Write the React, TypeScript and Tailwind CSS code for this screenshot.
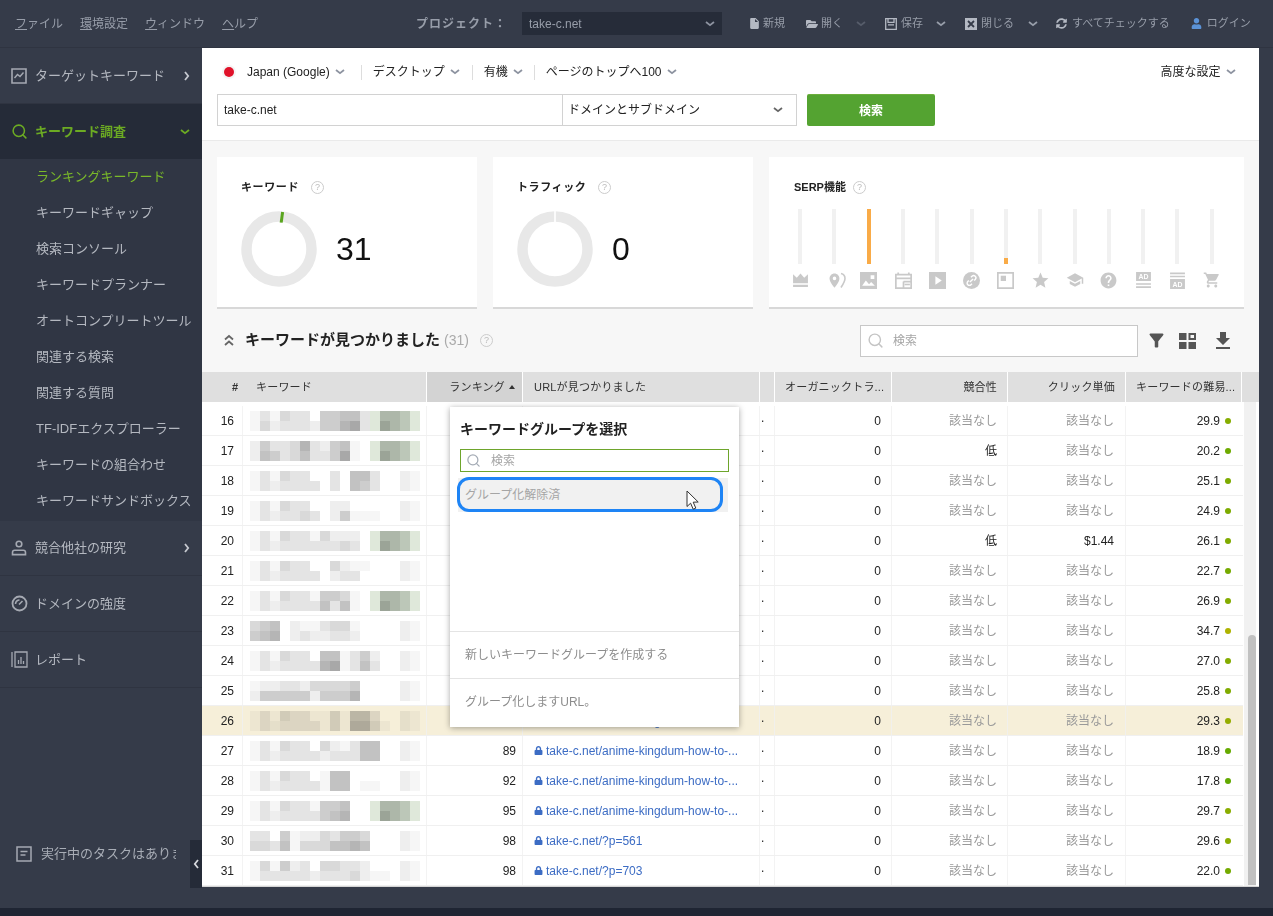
import type { ReactNode } from 'react'
import { MdPlace, MdStar, MdSchool, MdHelp, MdShoppingCart, MdFileDownload, MdInsertDriveFile, MdFilterAlt } from 'react-icons/md'
import { FaFolderOpen, FaUser, FaSyncAlt, FaLock } from 'react-icons/fa'
import { Search } from 'lucide-react'

const FONT = "font-['Liberation_Sans','Noto_Sans_CJK_JP',sans-serif]"

function Chev({ className = 'text-[#8d93a0]' }: { className?: string }) {
  return (
    <svg width="10" height="6" viewBox="0 0 10 6" className={`shrink-0 ${className}`}>
      <path d="M1 1l4 3.2L9 1" fill="none" stroke="currentColor" strokeWidth="1.8" />
    </svg>
  )
}

function ChevRight({ className = 'text-[#c5c8cf]' }: { className?: string }) {
  return (
    <svg width="6" height="10" viewBox="0 0 6 10" className={`shrink-0 ${className}`}>
      <path d="M1 1l3.2 4L1 9" fill="none" stroke="currentColor" strokeWidth="1.8" />
    </svg>
  )
}

function Help() {
  return (
    <span className="flex h-[13px] w-[13px] items-center justify-center rounded-full border border-[#ccc] text-[9px] leading-none text-[#bbb]">
      ?
    </span>
  )
}

// top bar

function TopBar() {
  return (
    <div className={`flex h-12 shrink-0 items-center border-b border-[#2f3441] bg-[#353b49] pl-[15px] text-[#979da9]`}>
      <div className="flex w-[401px] shrink-0 gap-[17px] text-[12px]">
        <span><span className="underline">フ</span>ァイル</span>
        <span><span className="underline">環</span>境設定</span>
        <span><span className="underline">ウ</span>ィンドウ</span>
        <span><span className="underline">ヘ</span>ルプ</span>
      </div>
      <span className="w-[106px] shrink-0 text-[12px] font-bold tracking-[1px]">プロジェクト：</span>
      <div className="flex h-[23px] w-[200px] shrink-0 items-center justify-between bg-[#262c39] pl-[7px] pr-[7px] text-[12px]">
        take-c.net
        <Chev />
      </div>
      <div className="flex items-center text-[11px]">
        <MdInsertDriveFile size={13} className="ml-[26px] text-[#b4b9c3]" />
        <span className="ml-[2px] tracking-[0px]">新規</span>
        <FaFolderOpen size={12} className="ml-[21px] text-[#b4b9c3]" />
        <span className="ml-[3px]">開く</span>
        <Chev className="ml-[13px] text-[#565c6a]" />
        <svg width="12" height="12" viewBox="0 0 12 12" className="ml-[19px] text-[#b4b9c3]">
          <path d="M.7.7h10.6v10.6H.7zM3 .7v3.6h6V.7M3 6.8h6" fill="none" stroke="currentColor" strokeWidth="1.3" />
        </svg>
        <span className="ml-[4px]">保存</span>
        <Chev className="ml-[13px]" />
        <svg width="12" height="12" viewBox="0 0 12 12" className="ml-[19px] text-[#b4b9c3]">
          <path d="M0 0h12v12H0z" fill="currentColor" />
          <path d="M3 3l6 6M9 3l-6 6" stroke="#353b49" strokeWidth="1.8" />
        </svg>
        <span className="ml-[4px]">閉じる</span>
        <Chev className="ml-[14px]" />
        <FaSyncAlt size={11} className="ml-[18px] text-[#b4b9c3]" />
        <span className="ml-[5px]">すべてチェックする</span>
        <FaUser size={11} className="ml-[21px] text-[#5b93d8]" />
        <span className="ml-[5px]">ログイン</span>
      </div>
    </div>
  )
}

// sidebar

const SUB_ITEMS = [
  'ランキングキーワード',
  'キーワードギャップ',
  '検索コンソール',
  'キーワードプランナー',
  'オートコンプリートツール',
  '関連する検索',
  '関連する質問',
  'TF-IDFエクスプローラー',
  'キーワードの組合わせ',
  'キーワードサンドボックス',
]

function NavRow({ icon, label, chevron, height = 'h-[56px]' }: { icon: ReactNode; label: string; chevron?: boolean; height?: string }) {
  return (
    <div className={`flex ${height} items-center border-b border-[#2f3441] pl-[11px] pr-[12px] text-[13px] text-[#b4b8c0]`}>
      <span className="flex w-[24px] shrink-0 items-center">{icon}</span>
      <span className="flex-1">{label}</span>
      {chevron && <ChevRight />}
    </div>
  )
}

function Sidebar() {
  return (
    <div className="relative flex h-full w-[202px] shrink-0 flex-col">
      <NavRow
        label="ターゲットキーワード"
        chevron
        icon={
          <svg width="16" height="16" viewBox="0 0 16 16" className="text-[#a5a9b2]">
            <path d="M1 1h14v14H1z" fill="none" stroke="currentColor" strokeWidth="1.6" />
            <path d="M3.5 10l3-3.5 2.5 2 3.5-4" fill="none" stroke="currentColor" strokeWidth="1.4" />
          </svg>
        }
      />
      <div className="flex h-[55px] items-center bg-[#252b38] pl-[11px] pr-[12px] text-[13px] font-bold text-[#6cab23]">
        <Search size={17} strokeWidth={2.2} className="mr-[7px] shrink-0" />
        <span className="flex-1">キーワード調査</span>
        <Chev className="text-[#6cab23]" />
      </div>
      <div className="flex flex-col bg-[#303644] pb-[2px]">
        {SUB_ITEMS.map((s, i) => (
          <div key={s} className={`flex h-[36px] items-center whitespace-nowrap pl-[36px] text-[13px] ${i === 0 ? 'text-[#7ab929]' : 'text-[#b4b8c0]'}`}>
            {s}
          </div>
        ))}
      </div>
      <NavRow
        label="競合他社の研究"
        chevron
        height="h-[55px]"
        icon={
          <svg width="16" height="16" viewBox="0 0 16 16" className="text-[#a5a9b2]">
            <circle cx="8" cy="4" r="2.8" fill="none" stroke="currentColor" strokeWidth="1.6" />
            <path d="M1.5 14.6v-2.2c0-1.4 1-2.2 2.2-2.2h8.6c1.2 0 2.2.8 2.2 2.2v2.2z" fill="none" stroke="currentColor" strokeWidth="1.6" />
          </svg>
        }
      />
      <NavRow
        label="ドメインの強度"
        icon={
          <svg width="17" height="17" viewBox="0 0 17 17" className="text-[#a5a9b2]">
            <circle cx="8.5" cy="8.5" r="7" fill="none" stroke="currentColor" strokeWidth="1.8" />
            <path d="M8 9.5l3.5-3.5M4.5 9a4 4 0 0 1 4-4" fill="none" stroke="currentColor" strokeWidth="1.6" />
          </svg>
        }
      />
      <NavRow
        label="レポート"
        icon={
          <svg width="17" height="17" viewBox="0 0 17 17" className="text-[#a5a9b2]">
            <path d="M1 1v15M4 1h12v15H4zM7.5 13V9M10 13V6M12.5 13v-3" fill="none" stroke="currentColor" strokeWidth="1.3" />
          </svg>
        }
      />
      <div className="mt-auto flex h-[96px] items-center pb-[12px]">
        <svg width="16" height="16" viewBox="0 0 16 16" className="ml-[16px] shrink-0 text-[#a5a9b2]">
          <path d="M1 1h14v14H1zM4.5 5.5h7M4.5 9h5" fill="none" stroke="currentColor" strokeWidth="1.5" />
        </svg>
        <span className="ml-[9px] w-[135px] overflow-hidden whitespace-nowrap text-[13px] text-[#a8adb6]">実行中のタスクはありません</span>
      </div>
      <div className="absolute bottom-[20px] right-0 flex h-[48px] w-[12px] items-center justify-center bg-[#252b38]">
        <svg width="6" height="10" viewBox="0 0 6 10" className="text-[#d5d7dc]">
          <path d="M5 1L1.8 5 5 9" fill="none" stroke="currentColor" strokeWidth="1.8" />
        </svg>
      </div>
    </div>
  )
}

// summary cards

function Donut({ kind }: { kind: 'tick' | 'empty' }) {
  return (
    <svg width="76" height="76" viewBox="0 0 76 76" className="shrink-0">
      <circle cx="38" cy="38" r="32.5" fill="none" stroke="#e8e8e8" strokeWidth="10.5" />
      {kind === 'tick' ? (
        <path d="M41.6 1l-1.4 10.6" stroke="#5aa51f" strokeWidth="3" />
      ) : (
        <path d="M38 0v11" stroke="#fff" strokeWidth="1.6" />
      )}
    </svg>
  )
}

function StatCard({ title, value, kind, titleWidth }: { title: string; value: string; kind: 'tick' | 'empty'; titleWidth: string }) {
  return (
    <div className="h-[152px] w-[260px] shrink-0 border-b-2 border-[#d8d8d8] bg-white pl-[24px] pt-[23px]">
      <div className="flex h-[14px] items-center">
        <span className={`${titleWidth} text-[11px] font-bold tracking-[0.6px] text-[#222]`}>{title}</span>
        <Help />
      </div>
      <div className="mt-[17px] flex items-center">
        <Donut kind={kind} />
        <span className="ml-[19px] text-[32px] leading-none text-[#111]">{value}</span>
      </div>
    </div>
  )
}

const ICO = 'h-[17px] w-[17px] text-[#c9c9c9]'

const SERP_ICONS: ReactNode[] = [
  <svg key="crown" viewBox="0 0 16 16" className={ICO}><path d="M1 2l3.5 3.5L8 1.5l3.5 4L15 2v8.5H1zM1 12h14v2H1z" fill="currentColor" /></svg>,
  <span key="pin" className="relative flex"><MdPlace className={ICO} /><svg viewBox="0 0 6 16" className="absolute -right-[3px] top-0 h-[17px] w-[6px] text-[#c9c9c9]"><path d="M1 15c2-3 4-6 4-9S3.5 1.500 1 1" fill="none" stroke="currentColor" strokeWidth="1.6" /></svg></span>,
  <svg key="image" viewBox="0 0 16 16" className={ICO}><path d="M0 0h16v16H0z" fill="currentColor" /><path d="M2 13l3.500-5 3 3.500 2-2 3.500 3.500zM10 3h3.500v3.500H10z" fill="#fff" /></svg>,
  <svg key="layout" viewBox="0 0 16 16" className={ICO}><path d="M.8 2.500h14.400v12.700H.800zM.8 6h14.400M8 9v6M8 9h7M3 .5v2M13 .5v2" fill="none" stroke="currentColor" strokeWidth="1.600" /><path d="M9 11h5v1.500H9z" fill="currentColor" /></svg>,
  <svg key="play" viewBox="0 0 16 16" className={ICO}><path d="M0 0h16v16H0z" fill="currentColor" /><path d="M6 4l6 4-6 4z" fill="#fff" /></svg>,
  <svg key="link" viewBox="0 0 16 16" className={ICO}><circle cx="8" cy="8" r="8" fill="currentColor" /><path d="M6.500 9.500l3-3M7.500 5l1-1a2.100 2.100 0 0 1 3 3l-1 1M8.500 11l-1 1a2.100 2.100 0 0 1-3-3l1-1" fill="none" stroke="#fff" strokeWidth="1.300" /></svg>,
  <svg key="snippet" viewBox="0 0 16 16" className={ICO}><path d="M.8.800h14.400v14.400H.800z" fill="none" stroke="currentColor" strokeWidth="1.600" /><path d="M3.500 3.500h5v5h-5z" fill="currentColor" /></svg>,
  <MdStar key="star" className="h-[19px] w-[19px] text-[#c9c9c9]" />,
  <MdSchool key="school" className="h-[18px] w-[18px] text-[#c9c9c9]" />,
  <MdHelp key="help" className="h-[19px] w-[19px] text-[#c9c9c9]" />,
  <svg key="ad1" viewBox="0 0 16 16" className={ICO}><path d="M1 0h14v8.500H1zM1 10.500h14V12H1zM1 13.500h14V15H1z" fill="currentColor" /><text x="8" y="7" textAnchor="middle" fontSize="6.500" fontWeight="700" fill="#fff">AD</text></svg>,
  <svg key="ad2" viewBox="0 0 16 16" className={ICO}><path d="M1 .5h14V2H1zM1 3.500h14V5H1zM1 6.500h14V16H1z" fill="currentColor" /><text x="8" y="14" textAnchor="middle" fontSize="6.500" fontWeight="700" fill="#fff">AD</text></svg>,
  <MdShoppingCart key="cart" className="h-[18px] w-[18px] text-[#c9c9c9]" />,
]

const SERP_FILL: Record<number, number> = { 2: 55, 6: 6 }

function SerpCard() {
  return (
    <div className="h-[152px] w-[475px] shrink-0 border-b-2 border-[#d8d8d8] bg-white pl-[14px] pt-[23px]">
      <div className="ml-[11px] flex h-[14px] items-center">
        <span className="w-[60px] text-[11px] font-bold text-[#222]">SERP機能</span>
        <span className="-ml-[1px]"><Help /></span>
      </div>
      <div className="mt-[15px] flex">
        {SERP_ICONS.map((icon, i) => (
          <div key={i} className="flex w-[34.3px] shrink-0 flex-col items-center">
            <div className="relative h-[55px] w-[4px] bg-[#f1f1f1]">
              {SERP_FILL[i] && (
                <div className="absolute bottom-0 left-0 w-full bg-[#f9ab47]" style={{ height: SERP_FILL[i] }} />
              )}
            </div>
            <div className="mt-[7px] flex h-[18px] items-center justify-center">{icon}</div>
          </div>
        ))}
      </div>
    </div>
  )
}

// table

const GRAYS: Record<string, string> = {
  '1': '#f6f6f6', '2': '#eeeeee', '3': '#e4e4e4', '4': '#d9d9d9', '5': '#cdcdcd', '6': '#c2c2c2', '7': '#b5b5b5', '8': '#a8a8a8',
  a: '#dfe8da', b: '#bcc7b8', c: '#adb7a9', d: '#9ba497',
}

interface Row {
  n: number
  mosaic: [string, string]
  rank: string
  url: string
  comp: string
  cpc: string
  diff: string
  dot: string
}

const ANIME = 'take-c.net/anime-kingdum-how-to-...'
const NA = '該当なし'

const ROWS: Row[] = [
  { n: 16, mosaic: ['131433055663accba', '142333255783adcba'], rank: '', url: ANIME, comp: NA, cpc: NA, diff: '29.9', dot: '#86ad00' },
  { n: 17, mosaic: ['253347325610accba', '265346335810adcba'], rank: '', url: ANIME, comp: '低', cpc: NA, diff: '20.2', dot: '#6eaa00' },
  { n: 18, mosaic: ['13143300306630021', '13233330306530021'], rank: '', url: ANIME, comp: NA, cpc: NA, diff: '25.1', dot: '#7dab00' },
  { n: 19, mosaic: ['13143300220000021', '13233430251110021'], rank: '', url: ANIME, comp: NA, cpc: NA, diff: '24.9', dot: '#7dab00' },
  { n: 20, mosaic: ['131433142220accba', '132333333430adcba'], rank: '', url: ANIME, comp: '低', cpc: '$1.44', diff: '26.1', dot: '#80ab00' },
  { n: 21, mosaic: ['13143300421100021', '13233330233000021'], rank: '', url: ANIME, comp: NA, cpc: NA, diff: '22.7', dot: '#76aa00' },
  { n: 22, mosaic: ['131433155410accba', '132333363610adcba'], rank: '', url: ANIME, comp: NA, cpc: NA, diff: '26.9', dot: '#84ac00' },
  { n: 23, mosaic: ['45602113441000021', '56702322332000021'], rank: '', url: ANIME, comp: NA, cpc: NA, diff: '34.7', dot: '#aeb300' },
  { n: 24, mosaic: ['13143306613520021', '13233337813630021'], rank: '', url: ANIME, comp: NA, cpc: NA, diff: '27.0', dot: '#84ac00' },
  { n: 25, mosaic: ['12233244445000021', '25555525557000021'], rank: '', url: ANIME, comp: NA, cpc: NA, diff: '25.8', dot: '#80ab00' },
  { n: 26, mosaic: ['13143311416630021', '13233331417741021'], rank: '', url: ANIME, comp: NA, cpc: NA, diff: '29.3', dot: '#95ad00' },
  { n: 27, mosaic: ['13143304213660021', '13233332333660021'], rank: '89', url: ANIME, comp: NA, cpc: NA, diff: '18.9', dot: '#66aa00' },
  { n: 28, mosaic: ['13143301660000021', '13233331660110021'], rank: '92', url: ANIME, comp: NA, cpc: NA, diff: '17.8', dot: '#62a900' },
  { n: 29, mosaic: ['131433155600accba', '132333356700adcba'], rank: '95', url: ANIME, comp: NA, cpc: NA, diff: '29.7', dot: '#8aad00' },
  { n: 30, mosaic: ['33051224355400021', '44361444667600021'], rank: '98', url: 'take-c.net/?p=561', comp: NA, cpc: NA, diff: '29.6', dot: '#8aad00' },
  { n: 31, mosaic: ['14152304433200021', '13333323334211021'], rank: '98', url: 'take-c.net/?p=703', comp: NA, cpc: NA, diff: '22.0', dot: '#74aa00' },
]

function Mosaic({ lines }: { lines: [string, string] }) {
  return (
    <svg width="170" height="20" viewBox="0 0 170 20" shapeRendering="crispEdges" className="mix-blend-multiply">
      {lines.map((line, y) =>
        line.split('').map((c, x) =>
          c === '0' ? null : <rect key={`${x}-${y}`} x={x * 10} y={y * 10} width="10" height="10" fill={GRAYS[c]} />
        )
      )}
    </svg>
  )
}

function HeaderCell({ className, children }: { className: string; children: ReactNode }) {
  return <div className={`flex shrink-0 items-center overflow-hidden whitespace-nowrap border-r border-white text-[11px] tracking-[0.2px] text-[#333] ${className}`}>{children}</div>
}

function TableHeader() {
  return (
    <div className="flex h-[30px] shrink-0 bg-[#dfdfdf]">
      <div className="flex w-[41px] shrink-0 items-center justify-end pr-[5px] text-[11px] font-bold text-[#333]">#</div>
      <HeaderCell className="w-[184px] pl-[13px]">キーワード</HeaderCell>
      <HeaderCell className="w-[96px] justify-end bg-[#d3d3d3] pr-[7px]">
        ランキング
        <svg width="6" height="4" viewBox="0 0 6 4" className="ml-[4px] text-[#333]"><path d="M0 4l3-4 3 4z" fill="currentColor" /></svg>
      </HeaderCell>
      <HeaderCell className="w-[237px] pl-[11px]">URLが見つかりました</HeaderCell>
      <HeaderCell className="w-[15px]"> </HeaderCell>
      <HeaderCell className="w-[117px] pl-[10px]">オーガニックトラ...</HeaderCell>
      <HeaderCell className="w-[116px] justify-end pr-[10px]">競合性</HeaderCell>
      <HeaderCell className="w-[118px] justify-end pr-[10px]">クリック単価</HeaderCell>
      <HeaderCell className="w-[116px] pl-[10px]">キーワードの難易...</HeaderCell>
    </div>
  )
}

function TableRow({ row }: { row: Row }) {
  const cell = 'flex h-full shrink-0 items-center border-r border-[#f0f0f0]/80 overflow-hidden whitespace-nowrap'
  const muted = (v: string) => (v === NA ? 'text-[#999]' : 'text-[#222]')
  return (
    <div className={`flex h-[30px] shrink-0 border-b border-[#f0f0f0] text-[12px] text-[#222] ${row.n === 26 ? 'bg-[#f6efd9]' : 'bg-white'}`}>
      <div className={`${cell} w-[41px] justify-end pr-[8px]`}>{row.n}</div>
      <div className={`${cell} w-[184px] pl-[7px]`}><Mosaic lines={row.mosaic} /></div>
      <div className={`${cell} w-[96px] justify-end pr-[6px]`}>{row.rank}</div>
      <div className={`${cell} w-[237px] pl-[11px] text-[#3c6cc4]`}>
        <FaLock size={9} className="mr-[3px] shrink-0" />
        {row.url}
      </div>
      <div className={`${cell} w-[15px] items-end pb-[8px] pl-[1px]`}>.</div>
      <div className={`${cell} w-[117px] justify-end pr-[10px]`}>0</div>
      <div className={`${cell} w-[116px] justify-end pr-[10px] ${muted(row.comp)}`}>{row.comp}</div>
      <div className={`${cell} w-[118px] justify-end pr-[11px] ${muted(row.cpc)}`}>{row.cpc}</div>
      <div className="flex h-full w-[116px] shrink-0 items-center justify-end pr-[11px]">
        {row.diff}
        <span className="ml-[5px] h-[6px] w-[6px] rounded-full" style={{ background: row.dot }} />
      </div>
    </div>
  )
}

function GroupPopover() {
  return (
    <div className="absolute left-[248px] top-[359px] flex h-[320px] w-[289px] flex-col bg-white shadow-[0_1px_6px_rgba(0,0,0,0.35)]">
      <div className="flex h-[42px] shrink-0 items-center pl-[10px] pt-[2px] text-[14px] font-bold text-[#222]">キーワードグループを選択</div>
      <div className="mx-[10px] flex h-[23px] shrink-0 items-center border border-[#6ea52c] pl-[5px] text-[12px] text-[#a5a5a5]">
        <Search size={15} className="mr-[10px] text-[#a4abb5]" />
        検索
      </div>
      <div className="relative ml-[8px] mr-[11px] mt-[6px] flex h-[34px] shrink-0 items-center bg-[#f1f1f1] pl-[7px] text-[12px] text-[#a5a5a5]">
        グループ化解除済
        <div className="absolute -left-px -top-px bottom-0 right-[5px] rounded-[12px] border-[3px] border-[#1e84f5]" />
        <svg width="14" height="21" viewBox="0 0 14 21" className="absolute left-[228px] top-[12px]">
          <path d="M1 1v15.500l3.600-3.300 2.600 6 2.600-1.100-2.600-5.900 5-.2z" fill="#fff" stroke="#333" strokeWidth="1" />
        </svg>
      </div>
      <div className="mt-[119px] flex h-[47px] shrink-0 items-center border-t border-[#e4e4e4] pl-[15px] text-[12px] text-[#8d8d8d]">新しいキーワードグループを作成する</div>
      <div className="flex h-[47px] shrink-0 items-center border-t border-[#e4e4e4] pl-[15px] text-[12px] text-[#8d8d8d]">グループ化しますURL。</div>
    </div>
  )
}

function Main() {
  return (
    <div className="relative flex h-[839px] w-[1057px] shrink-0 flex-col overflow-hidden bg-[#f7f7f7]">
      <div className="h-[93px] shrink-0 border-b border-[#eaeaea] bg-white pl-[15px] pt-[14px] text-[12px] text-[#222]">
        <div className="flex h-[20px] items-center">
          <span className="ml-[7px] h-[10px] w-[10px] rounded-full bg-[#e0122a] shadow-[0_0_0_2px_#f5f5f5]" />
          <span className="ml-[13px]">Japan (Google)</span>
          <span className="ml-[5px]"><Chev /></span>
          <span className="ml-[16px] h-[15px] w-px bg-[#ddd]" />
          <span className="ml-[11px]">デスクトップ</span>
          <span className="ml-[5px]"><Chev /></span>
          <span className="ml-[12px] h-[15px] w-px bg-[#ddd]" />
          <span className="ml-[11px]">有機</span>
          <span className="ml-[5px]"><Chev /></span>
          <span className="ml-[11px] h-[15px] w-px bg-[#ddd]" />
          <span className="ml-[11px]">ページのトップへ100</span>
          <span className="ml-[5px]"><Chev /></span>
          <span className="ml-[484px]">高度な設定</span>
          <span className="ml-[5px]"><Chev /></span>
        </div>
        <div className="mt-[12px] flex h-[32px]">
          <div className="flex w-[346px] items-center border border-[#d2d2d2] pl-[6px]">take-c.net</div>
          <div className="flex w-[234px] items-center justify-between border-y border-r border-[#d2d2d2] pl-[5px] pr-[13px]">
            ドメインとサブドメイン
            <Chev className="text-[#666]" />
          </div>
          <div className="ml-[10px] flex w-[128px] items-center justify-center rounded-[2px] border-t border-[#6cae3c] bg-[#54a331] font-bold text-white">検索</div>
        </div>
      </div>

      <div className="flex shrink-0 gap-[16px] pl-[15px] pt-[16px]">
        <StatCard title="キーワード" value="31" kind="tick" titleWidth="w-[70px]" />
        <StatCard title="トラフィック" value="0" kind="empty" titleWidth="w-[81px]" />
        <SerpCard />
      </div>

      <div className="flex h-[63px] shrink-0 items-center pl-[22px] pr-[24px]">
        <svg width="10" height="13" viewBox="0 0 10 13" className="text-[#666]">
          <path d="M1 5.500L5 2l4 3.500M1 11l4-3.500L9 11" fill="none" stroke="currentColor" strokeWidth="1.800" />
        </svg>
        <span className="ml-[11px] text-[15px] font-bold text-[#222]">キーワードが見つかりました</span>
        <span className="ml-[4px] text-[14px] text-[#aaa]">(31)</span>
        <span className="ml-[11px]"><Help /></span>
        <div className="ml-auto flex h-[32px] w-[278px] items-center border border-[#c8c8c8] bg-white pl-[6px] text-[12px] text-[#a5a5a5]">
          <Search size={17} className="mr-[9px] text-[#c4c4c4]" />
          検索
        </div>
        <MdFilterAlt size={21} className="ml-[8px] text-[#555]" />
        <svg width="17" height="16" viewBox="0 0 17 16" className="ml-[12px] text-[#555]">
          <path d="M0 0h7.500v7H0zM9.500 0H17v7H9.500zM0 9h7.500v7H0zM9.500 9H17v7H9.500z" fill="currentColor" />
          <path d="M11.500 2H15v3h-3.500z" fill="#f7f7f7" />
        </svg>
        <MdFileDownload size={24} className="ml-[15px] text-[#555]" />
      </div>

      <TableHeader />

      <div className="flex min-h-0 flex-1 border-b border-[#d5d5d5] bg-white">
        <div className="flex w-[1041px] shrink-0 flex-col overflow-hidden pt-[4px]">
          {ROWS.map((r) => <TableRow key={r.n} row={r} />)}
        </div>
        <div className="ml-[1px] flex h-full w-[12px] shrink-0 flex-col bg-[#f1f1f1]">
          <div className="ml-[4px] mt-[233px] h-[250px] w-[8px] rounded-t-[4px] bg-[#c1c1c1]" />
        </div>
      </div>

      <GroupPopover />
    </div>
  )
}

export default function App() {
  return (
    <div className={`flex h-[916px] w-[1273px] flex-col overflow-hidden bg-[#353b49] ${FONT}`}>
      <TopBar />
      <div className="flex h-[860px] shrink-0">
        <Sidebar />
        <Main />
      </div>
      <div className="h-2 shrink-0 bg-[#1f2533]" />
    </div>
  )
}
